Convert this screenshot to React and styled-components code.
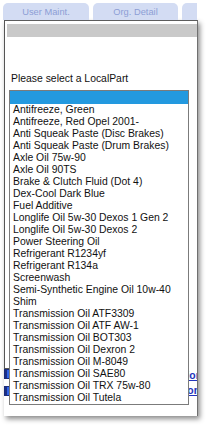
import React from "react";
import styled, { createGlobalStyle } from "styled-components";

const Global = createGlobalStyle`
  html, body { margin: 0; padding: 0; background: #fff; }
  body { font-family: "Liberation Sans", Arial, sans-serif; }
`;

const Page = styled.div`
  position: relative;
  width: 210px;
  height: 430px;
  overflow: hidden;
  background: #fff;
`;

const TabBar = styled.div`
  display: flex;
  gap: 4px;
  box-sizing: border-box;
  width: 197px;
  height: 20px;
  padding: 3px 0 0 3px;
  overflow: hidden;
`;

const Tab = styled.div`
  flex: none;
  width: ${(p) => p.$w}px;
  height: 17px;
  display: flex;
  align-items: center;
  justify-content: center;
  background: #d3dcf3;
  border-radius: 5px 5px 0 0;
  color: #8d9ed5;
  font-size: 9.3px;
  white-space: nowrap;
`;

const Panel = styled.div`
  box-sizing: border-box;
  margin-left: 4px;
  width: 194px;
  height: 396px;
  background: #fff;
  border-top: 1px solid #5c5c5c;
  border-right: 1px solid #707070;
  box-shadow: 2px 3px 5px rgba(0, 0, 0, 0.45);
  overflow: hidden;
`;

const Frame = styled.div`
  box-sizing: border-box;
  width: 184px;
  height: 348px;
  padding: 3px 0 0 2px;
  border-left: 1px solid #555;
  border-bottom: 1px solid #555;
`;

const GreyBar = styled.div`
  width: 191px;
  height: 13px;
  background: #c9c9c9;
`;

const Prompt = styled.div`
  margin-top: 36px;
  padding-left: 4px;
  font-size: 10.4px;
  line-height: 12px;
  color: #111;
  white-space: nowrap;
`;

const Actions = styled.div`
  display: flex;
  flex-direction: column;
`;

const ActionRow = styled.div`
  display: flex;
  align-items: flex-start;
  height: 17px;
`;

const ActionIcon = styled.span`
  flex: none;
  box-sizing: border-box;
  width: 9px;
  height: 10px;
  background: linear-gradient(90deg, #1b2f86 0 2px, #2f63e6 2px);
  border: 1px solid #1a2c7a;
`;

const ActionLink = styled.a`
  margin-left: auto;
  margin-right: ${(p) => p.$mr}px;
  margin-top: ${(p) => p.$top}px;
  font-size: 10.4px;
  line-height: 12px;
  font-weight: bold;
  color: #2233bb;
  text-decoration: underline;
  white-space: nowrap;
`;

const Dropdown = styled.ul`
  position: absolute;
  left: 9px;
  top: 90px;
  box-sizing: border-box;
  width: 180px;
  margin: 0;
  padding: 0;
  list-style: none;
  background: #fff;
  border: 1px solid #7b7b7b;
  font-size: 10.4px;
  line-height: 12px;
  color: #111;
`;

const Option = styled.li`
  height: ${(p) => (p.$selected ? 13 : 12)}px;
  padding-left: 3px;
  background: ${(p) => (p.$selected ? "#2399df" : "transparent")};
  white-space: nowrap;
  overflow: hidden;
`;

const items = [
  "",
  "Antifreeze, Green",
  "Antifreeze, Red Opel 2001-",
  "Anti Squeak Paste (Disc Brakes)",
  "Anti Squeak Paste (Drum Brakes)",
  "Axle Oil 75w-90",
  "Axle Oil 90TS",
  "Brake & Clutch Fluid (Dot 4)",
  "Dex-Cool Dark Blue",
  "Fuel Additive",
  "Longlife Oil 5w-30 Dexos 1 Gen 2",
  "Longlife Oil 5w-30 Dexos 2",
  "Power Steering Oil",
  "Refrigerant R1234yf",
  "Refrigerant R134a",
  "Screenwash",
  "Semi-Synthetic Engine Oil 10w-40",
  "Shim",
  "Transmission Oil ATF3309",
  "Transmission Oil ATF AW-1",
  "Transmission Oil BOT303",
  "Transmission Oil Dexron 2",
  "Transmission Oil M-8049",
  "Transmission Oil SAE80",
  "Transmission Oil TRX 75w-80",
  "Transmission Oil Tutela",
];

export default function App() {
  return (
    <Page>
      <Global />
      <TabBar>
        <Tab $w={86}>User Maint.</Tab>
        <Tab $w={85}>Org. Detail</Tab>
        <Tab $w={40} />
      </TabBar>
      <Panel>
        <Frame>
          <GreyBar />
          <Prompt>Please select a LocalPart</Prompt>
        </Frame>
        <Actions>
          <ActionRow>
            <ActionIcon />
            <ActionLink $mr={-5} $top={1}>Add Option</ActionLink>
          </ActionRow>
          <ActionRow>
            <ActionIcon />
            <ActionLink $mr={-3} $top={-1}>Remove Option</ActionLink>
          </ActionRow>
        </Actions>
      </Panel>
      <Dropdown>
        {items.map((it, i) => (
          <Option key={i} $selected={i === 0}>
            {it}
          </Option>
        ))}
      </Dropdown>
    </Page>
  );
}
